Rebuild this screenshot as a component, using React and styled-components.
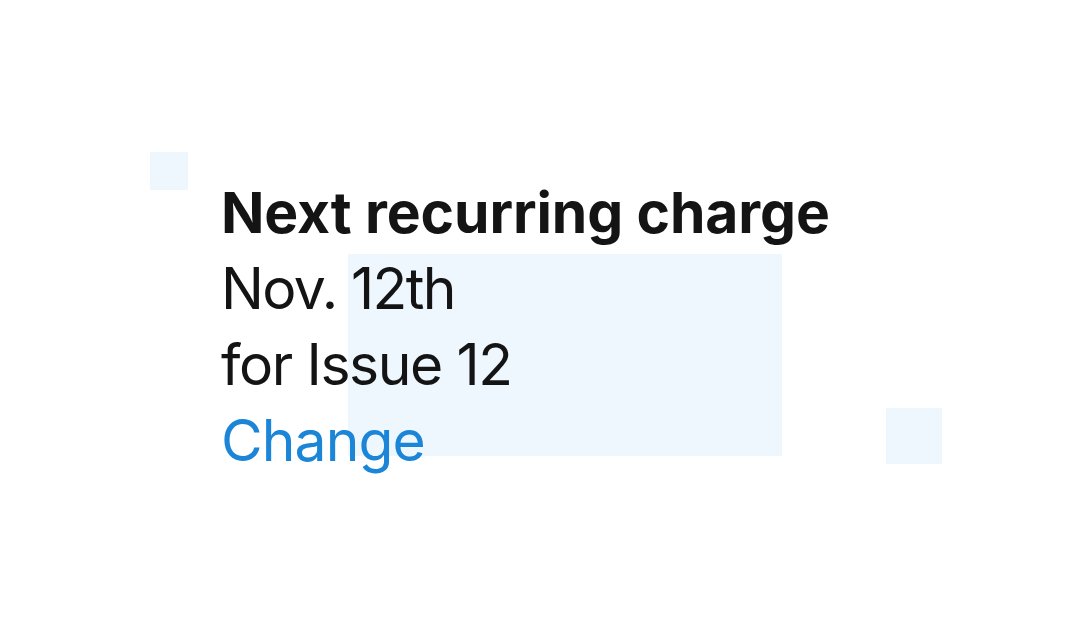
import React from "react";
import styled, { createGlobalStyle } from "styled-components";

const Global = createGlobalStyle`
  html, body { margin: 0; padding: 0; background: #ffffff; }
  body { font-family: Inter, "Noto Sans", sans-serif; }
`;

const Stage = styled.div`
  position: relative;
  width: 1080px;
  height: 620px;
  overflow: hidden;
  background: #ffffff;
`;

const Deco = styled.div`
  position: absolute;
  left: ${(p) => p.$x}px;
  top: ${(p) => p.$y}px;
  width: ${(p) => p.$w}px;
  height: ${(p) => p.$h}px;
  background: #eef6fe;
`;

const Content = styled.div`
  position: relative;
  display: flex;
  flex-direction: column;
  align-items: flex-start;
  padding: 175px 0 0 221px;
  color: #141414;
  font-size: 57px;
  line-height: 76px;
`;

const Heading = styled.h2`
  margin: 0;
  font-size: inherit;
  font-weight: 700;
  line-height: inherit;
  letter-spacing: -0.1px;
`;

const Line = styled.div`
  font-weight: 400;
  letter-spacing: ${(p) => p.$ls || -1}px;
`;

const Link = styled.a`
  color: #1b86d8;
  text-decoration: none;
  letter-spacing: -0.9px;
  cursor: pointer;
`;

export default function App() {
  return (
    <>
      <Global />
      <Stage>
        <Deco $x={150} $y={152} $w={38} $h={38} />
        <Deco $x={348} $y={254} $w={434} $h={202} />
        <Deco $x={886} $y={408} $w={56} $h={56} />
        <Content>
          <Heading>Next recurring charge</Heading>
          <Line $ls={-1.6}>Nov. 12th</Line>
          <Line $ls={-1.4}>for Issue 12</Line>
          <Link>Change</Link>
        </Content>
      </Stage>
    </>
  );
}
